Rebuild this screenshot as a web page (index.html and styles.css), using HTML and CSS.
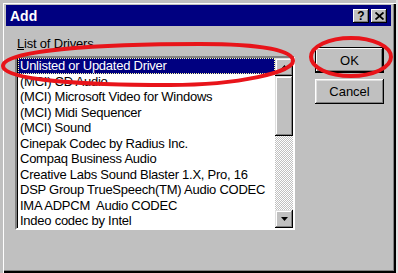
FILE: index.html
```html
<!DOCTYPE html>
<html>
<head>
<meta charset="utf-8">
<title>Add</title>
<link rel="stylesheet" href="styles.css">
</head>
<body>
<div class="window">
  <div class="titlebar">
    <span class="title">Add</span>
    <div class="tb-buttons">
      <span class="tb-btn">?</span>
      <span class="tb-btn"><svg width="9" height="8" viewBox="0 0 9 8"><path d="M0.5 0.5 L8.5 7.5 M8.5 0.5 L0.5 7.5" stroke="#000" stroke-width="1.8"/></svg></span>
    </div>
  </div>
  <div class="content">
    <div class="left">
      <div class="label"><u>L</u>ist of Drivers</div>
      <div class="listbox">
        <ul class="items">
          <li class="selected">Unlisted or Updated Driver</li>
          <li>(MCI) CD Audio</li>
          <li>(MCI) Microsoft Video for Windows</li>
          <li>(MCI) Midi Sequencer</li>
          <li>(MCI) Sound</li>
          <li>Cinepak Codec by Radius Inc.</li>
          <li>Compaq Business Audio</li>
          <li>Creative Labs Sound Blaster 1.X, Pro, 16</li>
          <li>DSP Group TrueSpeech(TM) Audio CODEC</li>
          <li>IMA ADPCM&nbsp; Audio CODEC</li>
          <li>Indeo codec by Intel</li>
        </ul>
        <div class="scrollbar">
          <div class="sb-btn"><svg width="7" height="4" viewBox="0 0 7 4"><path d="M3.5 0 L7 4 L0 4 Z" fill="#000"/></svg></div>
          <div class="thumb"></div>
          <div class="track"></div>
          <div class="sb-btn"><svg width="7" height="4" viewBox="0 0 7 4"><path d="M0 0 L7 0 L3.5 4 Z" fill="#000"/></svg></div>
        </div>
      </div>
    </div>
    <div class="buttons">
      <button class="btn default">OK</button>
      <button class="btn">Cancel</button>
    </div>
  </div>
  <svg class="annot" width="398" height="273" viewBox="0 0 398 273">
    <path d="M3 66 C3 50 100 44 200 44 C260 44 293 50 293 61 C293 72 240 85 170 85 C80 85 3 80 3 66 Z" fill="none" stroke="#e8141a" stroke-width="4"/>
    <ellipse cx="351" cy="57" rx="40" ry="19" fill="none" stroke="#e8141a" stroke-width="4"/>
  </svg>
</div>
</body>
</html>
```
FILE: styles.css
```css
html, body {
  margin: 0;
  padding: 0;
}
body {
  background: #e4e4e4;
  font-family: "Liberation Sans", Arial, sans-serif;
  width: 398px;
  height: 273px;
  overflow: hidden;
}
.window {
  position: relative;
  width: 396px;
  height: 273px;
  box-sizing: border-box;
  padding: 5px 5px 0 6px;
  background: #c0c0c0;
  box-shadow:
    inset 3px 3px 0 #c0c0c0,
    inset 4px 4px 0 #ffffff,
    inset -2px -2px 0 #000000,
    inset -3px -3px 0 #808080;
}
.titlebar {
  height: 21px;
  background: #000080;
  display: flex;
  align-items: center;
  justify-content: space-between;
  padding: 0 4px 0 4px;
}
.title {
  color: #fff;
  font-weight: bold;
  font-size: 14px;
}
.tb-buttons {
  display: flex;
  gap: 2px;
}
.tb-btn {
  width: 16px;
  height: 14px;
  background: #c0c0c0;
  display: flex;
  align-items: center;
  justify-content: center;
  font-weight: bold;
  font-size: 12px;
  color: #000;
  box-shadow:
    inset -1px -1px 0 #000,
    inset 1px 1px 0 #fff,
    inset -2px -2px 0 #808080;
}
.content {
  display: flex;
  padding: 10px 0 0 9px;
}
.left {
  width: 280px;
}
.label {
  font-size: 13px;
  line-height: 15px;
  height: 15px;
  padding-left: 2px;
  margin-bottom: 5px;
  color: #000;
  letter-spacing: -0.2px;
}
.listbox {
  width: 280px;
  height: 174px;
  box-sizing: border-box;
  background: #fff;
  display: flex;
  border-style: solid;
  border-width: 2px;
  border-color: #808080 #fff #fff #808080;
  box-shadow: inset 1px 1px 0 #000;
}
.items {
  flex: 1;
  list-style: none;
  margin: 0;
  padding: 0 0 0 1px;
  min-width: 0;
}
.items li {
  height: 15.5px;
  line-height: 15.5px;
  font-size: 13px;
  letter-spacing: -0.25px;
  padding-left: 2px;
  white-space: nowrap;
  overflow: hidden;
  color: #000;
}
.items li.selected {
  background: #000080;
  color: #fff;
  outline: 1px dotted #ffffa0;
  outline-offset: -1px;
}
.scrollbar {
  width: 18px;
  display: flex;
  flex-direction: column;
}
.sb-btn, .thumb {
  background: #c0c0c0;
  box-shadow:
    inset -1px -1px 0 #000,
    inset 1px 1px 0 #dfdfdf,
    inset -2px -2px 0 #808080,
    inset 2px 2px 0 #fff;
}
.sb-btn {
  height: 18px;
  display: flex;
  align-items: center;
  justify-content: center;
}
.thumb {
  height: 60px;
}
.track {
  flex: 1;
  background: repeating-conic-gradient(#ffffff 0 25%, #c0c0c0 0 50%) 0 0 / 2px 2px;
}
.buttons {
  display: flex;
  flex-direction: column;
  gap: 6px;
  margin-left: 20px;
  margin-top: 11px;
}
.btn {
  width: 69px;
  height: 25px;
  padding: 0;
  border: none;
  background: #c0c0c0;
  font-family: "Liberation Sans", Arial, sans-serif;
  font-size: 13px;
  color: #000;
  box-shadow:
    inset -1px -1px 0 #000,
    inset 1px 1px 0 #fff,
    inset -2px -2px 0 #808080,
    inset 2px 2px 0 #dfdfdf;
}
.btn.default {
  height: 26px;
  box-shadow:
    inset 0 0 0 1px #000,
    inset -2px -2px 0 #000,
    inset 2px 2px 0 #fff,
    inset -3px -3px 0 #808080;
}
.annot {
  position: absolute;
  top: 0;
  left: 0;
  pointer-events: none;
}
```
